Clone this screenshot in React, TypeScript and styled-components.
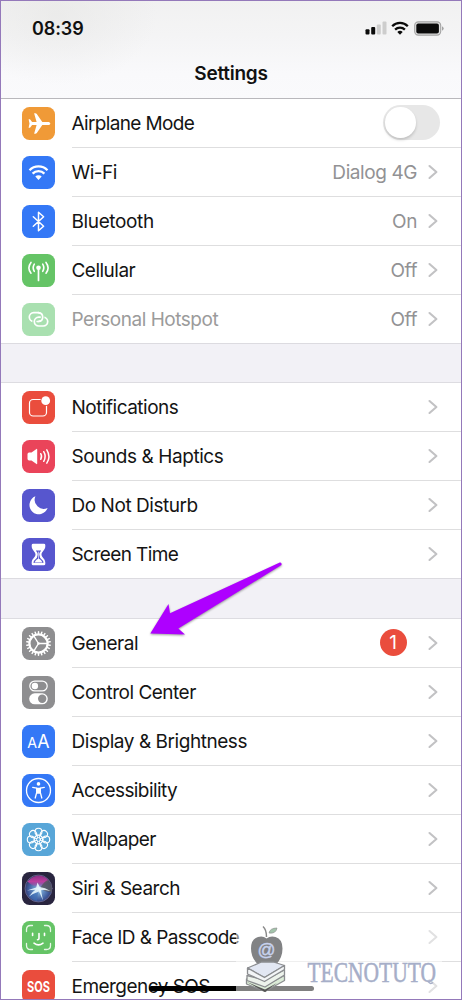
import React from 'react';
import styled, { createGlobalStyle } from 'styled-components';

const GlobalStyle = createGlobalStyle`
  html, body { margin: 0; padding: 0; background: #fff; }
  * { box-sizing: border-box; }
`;

const Screen = styled.div`
  position: relative;
  width: 462px;
  height: 1000px;
  overflow: hidden;
  background: #f2f1f6;
  border: 1px solid #9479ba;
  font-family: Inter, 'Liberation Sans', sans-serif;
  color: #111;
`;

const Header = styled.header`
  display: flex;
  flex-direction: column;
  height: 97.5px;
  border-bottom: 1px solid #b9b8bc;
  background:
    radial-gradient(ellipse 100px 70px at 56px 14px, rgba(228, 228, 226, 0.5), rgba(240, 240, 240, 0)),
    linear-gradient(#f1f1f1, #f4f4f5 35%, #f9f9fb 75%, #fafafc);
`;

const StatusBar = styled.div`
  display: flex;
  align-items: center;
  justify-content: space-between;
  height: 54px;
  padding: 0 17.5px 0 31px;
`;

const Clock = styled.time`
  font-size: 18px;
  font-weight: 600;
  letter-spacing: -0.1px;
`;

const StatusIcons = styled.div`
  display: flex;
  align-items: center;
  gap: 4.5px;
  svg { display: block; }
`;

const Title = styled.h1`
  margin: 0;
  padding-top: 7px;
  text-align: center;
  font-size: 19px;
  line-height: 24px;
  font-weight: 600;
  letter-spacing: -0.25px;
`;

const Group = styled.section`
  background: #fff;
  box-shadow: inset 0 -1px 0 #dcdbe0;
  & + & {
    margin-top: 39.1px;
    box-shadow: 0 -1px 0 #dddce1, inset 0 -1px 0 #dcdbe0;
  }
`;

const Row = styled.div<{ $dim?: boolean }>`
  display: flex;
  align-items: stretch;
  height: 49.1px;
  padding-left: 21px;
  color: ${(p) => (p.$dim ? '#9b9b9b' : '#141414')};
`;

const Tile = styled.div<{ $bg: string }>`
  width: 33px;
  height: 33px;
  margin: 8px 16.5px 0 0;
  flex: none;
  border-radius: 7.5px;
  overflow: hidden;
  background: ${(p) => p.$bg};
  svg { display: block; }
`;

const RowBody = styled.div<{ $last?: boolean }>`
  display: flex;
  flex: 1;
  align-items: center;
  padding-right: 23px;
  border-bottom: 1px solid ${(p) => (p.$last ? 'transparent' : '#dededf')};
`;

const Label = styled.span<{ $track: number }>`
  flex: 1;
  padding-top: 2px;
  font-size: 19px;
  line-height: 26px;
  white-space: nowrap;
  letter-spacing: ${(p) => p.$track}px;
`;

const Value = styled.span`
  margin-right: 11px;
  padding-top: 2px;
  font-size: 19px;
  line-height: 26px;
  letter-spacing: -0.42px;
  color: #929294;
`;

const Badge = styled.span`
  width: 27px;
  height: 27px;
  margin-right: 21.5px;
  border-radius: 50%;
  background: #ea4d3d;
  color: #fff;
  font-size: 19px;
  line-height: 27px;
  text-align: center;
`;

const Switch = styled.span`
  display: flex;
  align-items: center;
  width: 57px;
  height: 35px;
  margin-right: -2px;
  padding: 0 2px;
  border-radius: 18px;
  background: #e7e7e7;
`;

const Knob = styled.span`
  width: 30.5px;
  height: 30.5px;
  border-radius: 50%;
  background: #fff;
  box-shadow: 0 2px 3px rgba(0, 0, 0, 0.17);
`;

const HomeIndicator = styled.div`
  position: absolute;
  left: 148px;
  top: 985px;
  width: 165px;
  height: 5px;
  border-radius: 3px;
  background: #000;
`;

const Arrow = styled.svg`
  position: absolute;
  left: 139px;
  top: 549px;
  filter: drop-shadow(0 1.5px 1px rgba(0, 0, 0, 0.4));
`;

const Watermark = styled.svg`
  position: absolute;
  left: 235px;
  top: 919px;
`;

const Chevron = () => (
  <svg width="10" height="16" viewBox="0 0 10 16" fill="none">
    <path d="M1.500 2 L8.400 8 L1.500 14" stroke="#c2c2c4" strokeWidth="2.100" strokeLinecap="round" strokeLinejoin="round" />
  </svg>
);

const Glyph = ({ children }: { children: React.ReactNode }) => (
  <svg width="33" height="33" viewBox="0 0 33 33" fill="none" stroke="#fff" strokeWidth="1.4" strokeLinecap="round" strokeLinejoin="round">
    {children}
  </svg>
);

const plane = (
  <Glyph>
    <path stroke="none" fill="#fff" d="M28.300 16.500c0-1-1.200-1.500-2.400-1.500h-5.600l-5.500-8c-.4-.6-.8-.8-1.500-.8h-1.200l2.500 8.800h-4.500l-1.700-2.300c-.3-.4-.6-.5-1-.5h-.8l.9 4.300-.9 4.300h.8c.4 0 .7-.1 1-.5l1.700-2.300h4.500l-2.500 8.800h1.200c.7 0 1.100-.2 1.500-.8l5.500-8h5.600c1.200 0 2.400-.5 2.400-1.500z" />
  </Glyph>
);

const wifi = (
  <Glyph>
    <path d="M7.500 14.200a12.700 12.700 0 0 1 18 0" strokeWidth="2.300" strokeLinecap="butt" />
    <path d="M10.600 17.600a8.300 8.300 0 0 1 11.800 0" strokeWidth="2.300" strokeLinecap="butt" />
    <path d="M13.300 20.600a4.600 4.600 0 0 1 6.400 0l-3.200 3.300z" fill="#fff" stroke="none" />
  </Glyph>
);

const bluetooth = (
  <Glyph>
    <path d="M11.300 11.800L21.600 21.200L16.500 25.800V7.200L21.600 11.800L11.300 21.200" strokeWidth="1.500" />
  </Glyph>
);

const cellular = (
  <Glyph>
    <circle cx="16.500" cy="13.800" r="2.300" fill="#fff" stroke="none" />
    <path d="M16.500 14v12.500" strokeWidth="1.700" />
    <path d="M12.300 10.200q-2.200 3.600 0 7.200M9 8.400q-4.200 5.400 0 10.800M20.700 10.200q2.200 3.600 0 7.200M24 8.400q4.200 5.400 0 10.800" strokeWidth="1.600" />
  </Glyph>
);

const hotspot = (
  <Glyph>
    <rect x="7.300" y="9.700" width="13.400" height="8.800" rx="4.400" strokeWidth="1.700" />
    <rect x="12.300" y="14.200" width="13.400" height="8.800" rx="4.400" stroke="#a9e0b0" strokeWidth="4" />
    <rect x="12.300" y="14.200" width="13.400" height="8.800" rx="4.400" strokeWidth="1.700" />
    <path d="M18.300 10.400Q20.700 11.600 20.700 14.100Q20.700 16.400 18.600 17.800" stroke="#a9e0b0" strokeWidth="3.600" strokeLinecap="butt" />
    <path d="M16.300 9.700Q20.700 10.200 20.700 14.100Q20.700 18.500 16.300 18.500" strokeWidth="1.700" />
  </Glyph>
);

const notifications = (
  <Glyph>
    <rect x="7.500" y="8.500" width="17" height="16.500" rx="3.600" strokeWidth="1.200" />
    <circle cx="23.700" cy="9.700" r="5.300" fill="#ea4d3d" stroke="none" />
    <circle cx="23.700" cy="9.700" r="4.400" fill="#fff" stroke="none" />
  </Glyph>
);

const sounds = (
  <Glyph>
    <path d="M5.500 14.200q0-1.600 1.600-1.600h2.400l5-3.700q.7-.4.700.5v14.200q0 .9-.7.500l-5-3.700H7.100q-1.600 0-1.600-1.600z" fill="#fff" stroke="none" />
    <path d="M18.700 13.700q1.700 2.800 0 5.600M21.700 11.700q3 4.800 0 9.600M24.800 9.800q4.200 6.700 0 13.400" strokeWidth="1.500" />
  </Glyph>
);

const moon = (
  <Glyph>
    <path d="M13.400 7.300A9.300 9.300 0 1 0 25.600 18.900A9 9 0 0 1 13.400 7.300z" fill="#fff" stroke="none" />
  </Glyph>
);

const hourglass = (
  <Glyph>
    <path d="M11.200 5.800h10.600q1.500 0 1.500 1.300v1.200c0 4-3.800 5.400-3.800 8.200s3.800 4.200 3.800 8.200v1.200q0 1.300-1.500 1.300H11.200q-1.500 0-1.500-1.300v-1.200c0-4 3.800-5.400 3.800-8.200S9.700 12.300 9.700 8.300V7.100Q9.700 5.800 11.200 5.800z" fill="#fff" stroke="none" />
    <path d="M13.800 12.400h5.400q-1.900 2-1.900 4.300 0 3.200 3.400 5.900c.8.900.7 1.900.7 2.300H11.600c0-.4-.1-1.400.7-2.300q3.400-2.700 3.400-5.900 0-2.300-1.900-4.300z" fill="#5756ce" stroke="none" />
    <path d="M16.500 14v6.500M13 24q.5-1.700 3.500-3.200Q19.500 22.300 20 24z" stroke="#fff" fill="#fff" strokeWidth=".6" />
  </Glyph>
);

const gear = (
  <Glyph>
    <circle cx="16.500" cy="16.500" r="9.100" strokeWidth="2.300" />
    {Array.from({ length: 22 }, (_, i) => (
      <path key={i} d="M16.500 6.500V4.700" strokeWidth="1.500" transform={`rotate(${(i * 360) / 22} 16.500 16.500)`} />
    ))}
    <path d="M16.500 16.500h8M16.500 16.500l-4.400-7.200M16.500 16.500l-4.400 7.200" strokeWidth="1.400" />
    <circle cx="16.500" cy="16.500" r="1.300" fill="#fff" stroke="none" />
  </Glyph>
);

const controls = (
  <Glyph>
    <rect x="7.800" y="5.100" width="17.400" height="9.800" rx="4.900" strokeWidth="1.200" />
    <circle cx="12.900" cy="10" r="3.200" fill="#fff" stroke="none" />
    <rect x="7.200" y="17.300" width="18.600" height="11" rx="5.500" fill="#fff" stroke="none" />
    <circle cx="20.200" cy="22.800" r="4.200" fill="#8e8e90" stroke="none" />
  </Glyph>
);

const display = (
  <Glyph>
    <text x="5.300" y="23" fill="#fff" stroke="none" fontSize="15" fontFamily="Inter, sans-serif" textLength="9.800" lengthAdjust="spacingAndGlyphs">A</text>
    <text x="15.300" y="23" fill="#fff" stroke="none" fontSize="19" fontFamily="Inter, sans-serif" textLength="12.300" lengthAdjust="spacingAndGlyphs">A</text>
  </Glyph>
);

const accessibility = (
  <Glyph>
    <circle cx="16.500" cy="16.500" r="12" strokeWidth="1.300" />
    <circle cx="16.500" cy="9.900" r="1.800" fill="#fff" stroke="none" />
    <path d="M10.700 13.400l4 .8v4.300l-1.500 5.500M22.300 13.400l-4 .8v4.300l1.500 5.500" strokeWidth="1.300" />
    <path d="M14.200 13.700h4.600v4.800l-1 1.300h-2.600l-1-1.300z" fill="#fff" stroke="none" />
  </Glyph>
);

const wallpaper = (
  <Glyph>
    {Array.from({ length: 8 }, (_, i) => (
      <circle key={i} cx="16.500" cy="8.800" r="3.500" strokeWidth="1.100" transform={`rotate(${i * 45} 16.500 16.500)`} />
    ))}
    {Array.from({ length: 8 }, (_, i) => (
      <path key={i} d="M16.500 14.500V12.300" strokeWidth="1" transform={`rotate(${i * 45 + 22.5} 16.500 16.500)`} />
    ))}
    <circle cx="16.500" cy="16.500" r="4.400" strokeWidth=".9" />
    <circle cx="16.500" cy="16.500" r="1.900" strokeWidth=".9" />
  </Glyph>
);

const siri = (
  <Glyph>
    <defs>
      <radialGradient id="orb" cx=".5" cy=".55" r=".58">
        <stop offset="0" stopColor="#cfeaff" />
        <stop offset=".25" stopColor="#6f9ccc" />
        <stop offset=".65" stopColor="#3f5a9c" />
        <stop offset="1" stopColor="#2c2d55" />
      </radialGradient>
      <linearGradient id="blush" x1="0" y1="0" x2="0" y2="1">
        <stop offset="0" stopColor="#8e2f86" />
        <stop offset=".5" stopColor="#bb3f9f" />
        <stop offset="1" stopColor="#c13ba0" stopOpacity="0" />
      </linearGradient>
    </defs>
    <circle cx="16.500" cy="16.500" r="13.500" fill="url(#orb)" stroke="#77719a" strokeWidth=".7" />
    <path d="M5.500 9.500Q11 3.500 17 3.500Q23 3.800 26.500 8.500Q22 15 16 15.500Q10 14 5.500 9.500z" fill="url(#blush)" stroke="none" />
    <path d="M18 16.500Q22 9 26 8Q31 13 29.500 20Q24 20 18 16.500z" fill="#56565f" fillOpacity=".85" stroke="none" />
    <path d="M16 17Q10 22 6.500 23.500Q10 28 15 29Q15.500 22 17 18z" fill="#3d6fb8" fillOpacity=".6" stroke="none" />
    <path d="M5 18.500Q11 16.500 14.200 15.600L15.500 10.500L17.800 15Q23 15.500 28.500 19Q22 17.500 19 18.200L21 28.500L17 19.500Q11 21.500 7 24.500Q10.500 19.500 13.500 17.800Q9 17.800 5 18.500z" fill="#ecfbff" fillOpacity=".88" stroke="none" />
  </Glyph>
);

const faceId = (
  <Glyph>
    <path d="M4.500 10.500V8.500q0-4 4-4h2M22.500 4.500h2q4 0 4 4v2M28.500 22.500v2q0 4-4 4h-2M10.500 28.500h-2q-4 0-4-4v-2" strokeWidth="1.300" opacity=".85" />
    <path d="M10.600 12.300v2.200M22.500 12.300v2.200M17 12.500v5q0 1.200-1.500 1.200M12 22.200q4.500 3.400 9 0" strokeWidth="1.600" />
  </Glyph>
);

const sos = (
  <Glyph>
    <text x="5" y="21.700" fill="#fff" stroke="none" fontSize="14.600" fontWeight="700" fontFamily="Inter, sans-serif" textLength="23" lengthAdjust="spacingAndGlyphs">SOS</text>
  </Glyph>
);

type Item = {
  label: string;
  bg: string;
  icon: React.ReactNode;
  track: number;
  value?: string;
  badge?: string;
  toggle?: boolean;
  dim?: boolean;
};

const groups: Item[][] = [
  [
    { label: 'Airplane Mode', bg: '#f09a37', icon: plane, track: -0.65, toggle: true },
    { label: 'Wi-Fi', bg: '#3478f6', icon: wifi, track: -0.5, value: 'Dialog 4G' },
    { label: 'Bluetooth', bg: '#3478f6', icon: bluetooth, track: -0.37, value: 'On' },
    { label: 'Cellular', bg: '#65c466', icon: cellular, track: -0.52, value: 'Off' },
    { label: 'Personal Hotspot', bg: '#a9e0b0', icon: hotspot, track: -0.48, value: 'Off', dim: true },
  ],
  [
    { label: 'Notifications', bg: '#ea4d3d', icon: notifications, track: -0.5 },
    { label: 'Sounds & Haptics', bg: '#ea445a', icon: sounds, track: -0.43 },
    { label: 'Do Not Disturb', bg: '#5756ce', icon: moon, track: -0.45 },
    { label: 'Screen Time', bg: '#5756ce', icon: hourglass, track: -0.58 },
  ],
  [
    { label: 'General', bg: '#8e8e90', icon: gear, track: -0.5, badge: '1' },
    { label: 'Control Center', bg: '#8e8e90', icon: controls, track: -0.5 },
    { label: 'Display & Brightness', bg: '#3478f6', icon: display, track: -0.45 },
    { label: 'Accessibility', bg: '#3478f6', icon: accessibility, track: -0.6 },
    { label: 'Wallpaper', bg: '#58a6d8', icon: wallpaper, track: -0.63 },
    { label: 'Siri & Search', bg: '#29253f', icon: siri, track: -0.48 },
    { label: 'Face ID & Passcode', bg: '#65c466', icon: faceId, track: -0.58 },
    { label: 'Emergency SOS', bg: '#ea4d3d', icon: sos, track: -0.53 },
  ],
];

const SettingsRow = ({ item, last }: { item: Item; last: boolean }) => (
  <Row $dim={item.dim}>
    <Tile $bg={item.bg}>{item.icon}</Tile>
    <RowBody $last={last}>
      <Label $track={item.track}>{item.label}</Label>
      {item.value && <Value>{item.value}</Value>}
      {item.badge && <Badge>{item.badge}</Badge>}
      {item.toggle ? (
        <Switch>
          <Knob />
        </Switch>
      ) : (
        <Chevron />
      )}
    </RowBody>
  </Row>
);

export default function App() {
  return (
    <Screen>
      <GlobalStyle />
      <Header>
        <StatusBar>
          <Clock>08:39</Clock>
          <StatusIcons>
            <svg width="22" height="14" viewBox="0 0 22 14">
              <rect x="0.500" y="8.200" width="4" height="5.300" rx="1" fill="#0b0b0b" />
              <rect x="6.200" y="6" width="4" height="7.500" rx="1" fill="#0b0b0b" />
              <rect x="11.800" y="3.500" width="4" height="10" rx="1" fill="#cdcdcd" />
              <rect x="17.500" y="0.500" width="4" height="13" rx="1" fill="#cdcdcd" />
            </svg>
            <svg width="18" height="14" viewBox="0 0 18 14" fill="none" stroke="#0b0b0b" strokeWidth="2.300">
              <path d="M1.200 5.200a11 11 0 0 1 15.600 0" />
              <path d="M4.100 8.600a7 7 0 0 1 9.800 0" />
              <path d="M6.300 11.100a4 4 0 0 1 5.400 0L9 13.700z" fill="#0b0b0b" stroke="none" />
            </svg>
            <svg width="30" height="15" viewBox="0 0 30 15">
              <rect x="0.700" y="0.900" width="26" height="13.200" rx="3.600" fill="#e4e4e4" stroke="#a3a3a3" strokeWidth="1.100" />
              <rect x="2.300" y="2.600" width="22.600" height="9.800" rx="1.900" fill="#0b0b0b" />
              <path d="M28 5.200q1.700.8 1.700 2.300T28 9.800z" fill="#a3a3a3" />
            </svg>
          </StatusIcons>
        </StatusBar>
        <Title>Settings</Title>
      </Header>
      {groups.map((items, g) => (
        <Group key={g}>
          {items.map((item, i) => (
            <SettingsRow key={item.label} item={item} last={i === items.length - 1} />
          ))}
        </Group>
      ))}
      <HomeIndicator />
      <Arrow width="150" height="95" viewBox="140 550 150 95">
        <path d="M150.300 633.500L168.500 604L170 613.300L279.800 562.600Q282 562.200 281.500 565L178.300 628.600L185 634.600z" fill="#ae00ff" />
      </Arrow>
      <Watermark width="210" height="79" viewBox="236 920 210 79">
        <rect x="236" y="920" width="206" height="79" fill="#fff" fillOpacity=".5" />
        <path d="M263 926.500q3.500 3 3.500 10.500" stroke="#888" strokeWidth="1.500" fill="none" />
        <path d="M269 933q1-5 8-5-1 6-8 5z" fill="#a3c4ab" stroke="#888" strokeWidth=".6" />
        <path d="M266.500 938.500q4-3 9-1.500 7 2 7 11.500 0 9-6 15.500-4 2.500-9 1.500-5 1-10-1.500-6.500-6.500-6.500-15.500 0-9.500 7-11.500 5-1.500 8.500 1.500z" fill="#818284" />
        <text x="257.500" y="955.500" fontFamily="Liberation Sans, sans-serif" fontSize="18" fill="#c7d2ee" stroke="#c7d2ee" strokeWidth=".4" textLength="18" lengthAdjust="spacingAndGlyphs">@</text>
        <g stroke="#8b8d90" strokeWidth="1.300" strokeLinejoin="round">
          <path d="M246.500 979v5l18.500 7.500 19.500-11v-5l-19.500 10z" fill="#dcecd8" />
          <path d="M247 975.500v5L265 987l19.500-12v-5L265 980z" fill="#edf3ec" />
          <path d="M247.500 968l14-6h12l11 3.500-20 12z" fill="#e2e7f3" />
          <path d="M247.500 968v6l17 7.500 20-12v-4l-20 12z" fill="#f3f5f7" />
        </g>
        <path d="M247 982l18 7.500 12-6.500-12 9z" fill="#555" />
        <text x="307.500" y="982" fontFamily="Liberation Serif, serif" fontSize="28.500" fill="#a6aec8" stroke="#a6aec8" strokeWidth=".5" textLength="128.500" lengthAdjust="spacingAndGlyphs">TECNOTUTO</text>
        <path d="M428 981q2 4 5 1.500" stroke="#a6aec8" strokeWidth="1.500" fill="none" />
      </Watermark>
    </Screen>
  );
}
